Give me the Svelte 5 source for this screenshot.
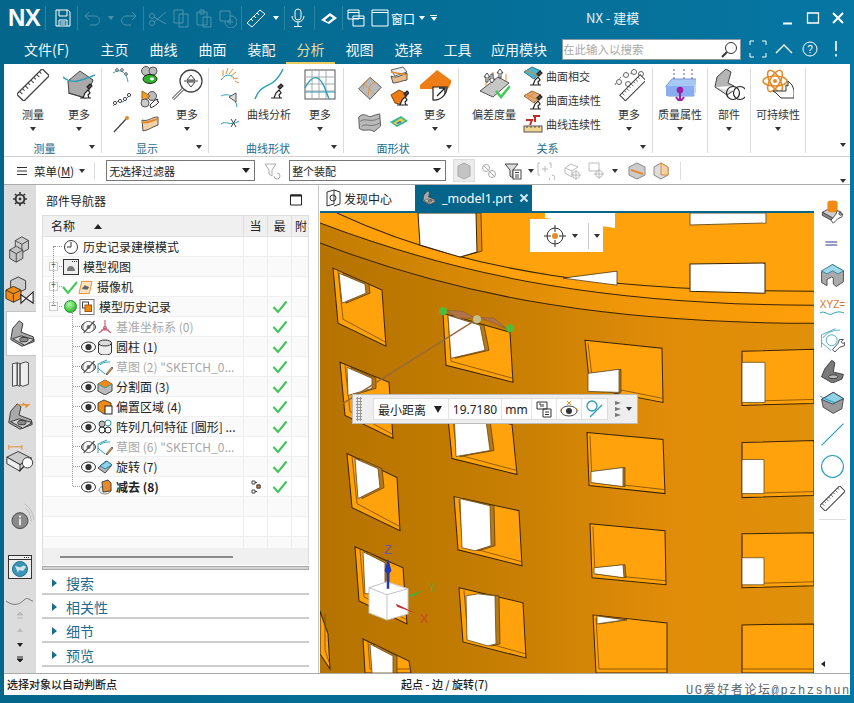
<script>
	const micro = (x, y) => `<g transform="translate(${x} ${y})" fill="#fff" stroke="#222" stroke-width="1.2"><path d="M-5 7h11M-2 7l2-5 3-3 2 3-2 2 1 3"/><path d="M2-4l3-3 2 2-3 3z" fill="#555"/></g>`;
	const ruler = `<g transform="rotate(-45 16 16)"><rect x="-2" y="11" width="36" height="10" fill="#fff" stroke="#444" stroke-width="1.3"/><path d="M2 11v4M6 11v3M10 11v4M14 11v3M18 11v4M22 11v3M26 11v4M30 11v3" stroke="#444"/></g>`;
	const part = `<path d="M4 22 6 10l7-8 4 3-2 9 13 5 1 5-13 5z" fill="#a9a9a9" stroke="#333"/><path d="M6 21l13 7 10-6-14-4z" fill="#d4d4d4" stroke="#333"/><ellipse cx="18" cy="22" rx="4.5" ry="2.4" fill="#8a8a8a" stroke="#333"/>`;
	const eye = (off) => `<ellipse cx="8" cy="8" rx="7" ry="5" fill="#fff" stroke="#333"/><circle cx="8" cy="8" r="3.1" fill="#333"/>` + (off ? `<circle cx="8" cy="8" r="5.6" fill="#fff" stroke="#777"/><circle cx="8" cy="8" r="2" fill="#777"/><path d="M3 14 14 2" stroke="#555" stroke-width="1.2"/>` : '');

	const icons = {
		measure: ruler,
		moreMeasure: `<path d="M5 12 17 2l13 9-7 18L6 24z" fill="#aaa" stroke="#444"/><path d="M5 24l17 5" stroke="#444"/><path d="M0 8c8 7 16 5 32-2" fill="none" stroke="#2a9db5" stroke-width="1.4"/>` + micro(22, 22),
		mag: `<circle cx="20" cy="12" r="11" fill="#fff" stroke="#444" stroke-width="1.3"/><path d="M13 12h14M20 6l-4 5h8zM20 18l-4-5h8z" fill="#fff" stroke="#444"/><path d="M12 20 2 30" stroke="#444" stroke-width="3"/><path d="M12 20 2 30" stroke="#fff" stroke-width="1.2"/>`,
		curveAna: `<path d="M2 30C8 12 20 22 30 0" fill="none" stroke="#2a9db5" stroke-width="1.4"/>` + micro(23, 22),
		graph: `<rect x="1" y="1" width="30" height="29" fill="#fff" stroke="#555"/><path d="M8 1v29M15 1v29M22 1v29M1 8h30M1 15h30M1 22h30" stroke="#aaa"/><path d="M1 19C10 2 17 8 22 22L25 30" fill="none" stroke="#2a9db5" stroke-width="1.4"/><path d="M1 23H31" stroke="#2a9db5"/>`,
		s_spikes: `<path d="M1 14C5 8 10 8 14 12" fill="none" stroke="#2a9db5"/><path d="M3 10 3 4M6 8l2-6M9 8l4-5M11 10l5-4M13 13l5-1M15 15l4 2" stroke="#e58a2c"/>`,
		s_dots: `<path d="M1 16 6 11l5 1 6-6" fill="none" stroke="#2a9db5"/><circle cx="3" cy="13" r="1.6" fill="#fff" stroke="#444"/><circle cx="8" cy="11" r="1.6" fill="#fff" stroke="#444"/><circle cx="13" cy="9" r="1.6" fill="#fff" stroke="#444"/><circle cx="17" cy="5" r="1.6" fill="#fff" stroke="#444"/>`,
		s_curvedots: `<path d="M1 7c6-4 13-3 15 9" fill="none" stroke="#2a9db5"/><circle cx="5" cy="4" r="1.3" fill="#fff" stroke="#555"/><circle cx="10" cy="4" r="1.3" fill="#fff" stroke="#555"/><circle cx="14" cy="8" r="1.3" fill="#fff" stroke="#555"/>`,
		s_pin: `<path d="M2 18 14 5" stroke="#444" stroke-width="1.3"/><circle cx="15" cy="4" r="2" fill="#e58a2c"/>`,
		s_green: `<circle cx="6" cy="5" r="4.5" fill="#bbb" stroke="#555"/><circle cx="13" cy="5" r="4" fill="#bbb" stroke="#555"/><ellipse cx="10" cy="13" rx="7" ry="4.5" fill="#2cb52c" stroke="#222"/><ellipse cx="12" cy="13" rx="2" ry="1.4" fill="#fff"/>`,
		s_wrench: `<circle cx="12" cy="6" r="4.5" fill="#bbb" stroke="#555"/><path d="M2 1l8 5-8 6z" fill="#f0a030" stroke="#a06010"/><circle cx="5" cy="13" r="4" fill="#ccc" stroke="#555"/><path d="M10 15l5-5 3-1-1 2 2 1-3 3-5 3z" fill="#fff" stroke="#333"/>`,
		s_band: `<path d="M2 6c6 2 9-3 16-3v8c-6 2-9 5-15 6z" fill="#f3d1a8" stroke="#555"/><path d="M2 8c6 2 9-2 16-3" fill="none" stroke="#e58a2c" stroke-width="2"/>`,
		s_approx: `<path d="M1 10c5-4 9 3 18-3" fill="none" stroke="#2a9db5"/><path d="M11 5l5 8M16 5l-5 8" stroke="#444"/>`,
		s_tri: `<path d="M1 6c7-3 14-1 16 11" fill="none" stroke="#2a9db5"/><path d="M9 7l7-4v9z" fill="#ddd" stroke="#555"/>`,
		f_net: `<path d="M2 17 16 3l14 12-14 15z" fill="#bbb" stroke="#444"/><path d="M8 17C8 8 14 4 16 4M14 25C14 12 20 8 24 10M8 10l14 14" fill="none" stroke="#e58a2c"/>`,
		f_wave: `<path d="M2 10c8-8 12 3 18-2l8-2 1 15-8 7c-6-5-12 1-18-4z" fill="#b9b9b9" stroke="#444"/><path d="M4 15c7-5 12 3 24-4M6 21c6-4 12 3 22-4" fill="none" stroke="#666"/>`,
		f_strip: `<path d="M2 4 14 1l4 5-12 4z" fill="#eee" stroke="#666"/><path d="M2 10c6 3 10-1 16-3v7c-6 1-10 3-14 3z" fill="#e8bc8a" stroke="#555"/><path d="M2 6l16 3" stroke="#e58a2c" stroke-width="1.5"/>`,
		f_orange: `<path d="M2 7 10 2l8 4-4 11-8-2z" fill="#ee7d16" stroke="#7a4410"/>` + micro(13, 10),
		f_rainbow: `<path d="M1 10 12 4l7 5-11 6z" fill="#34b59a"/><path d="M4 11l8-5 4 3-8 4z" fill="#e8d23a"/><path d="M7 11l4-2 2 1-4 2z" fill="#3a72d8"/>`,
		moreFace: `<path d="M1 16 18 1l15 11-4 8H1z" fill="#ee7d16"/><path d="M14 30v-12h14a13 13 0 0 1-14 13z" fill="#fff" stroke="#222" stroke-width="1.2"/><path d="M18 27l8-8M20 19h6v6" fill="none" stroke="#222" stroke-width="1.3"/>`,
		deviation: `<path d="M2 22 20 8l11 6-16 14z" fill="#c6c6c6" stroke="#555"/><path d="M8 17V6M15 11V3M22 10V1M28 12V5" stroke="#e58a2c"/><path d="M9 4l-3 4h2v5h2V8h2zM14 14l3-4h-2V5h-2v5h-2zM22 0l-3 4h2v5h2V4h2z" fill="#fff" stroke="#333" stroke-width=".9"/><path d="M18 22l5 6 9-11" fill="none" stroke="#3ecc55" stroke-width="2.6"/>`,
		r_inter: `<path d="M1 6 9 1l9 4-7 8z" fill="#4fb3cc" stroke="#2a7a90"/><path d="M2 4l14 6" stroke="#e58a2c"/>` + micro(12, 12),
		r_cont: `<path d="M1 6 9 1l9 4-7 8z" fill="#e0a878" stroke="#9a6a40"/><path d="M2 4l14 6M4 9l8-7" stroke="#e58a2c"/>` + micro(12, 12),
		r_curve: `<rect x="1" y="12" width="18" height="6" fill="#f2d690" stroke="#555"/><path d="M4 12v2M8 12v2M12 12v2M16 12v2" stroke="#555"/><path d="M3 6h6l-2 5M10 2h7M12 2v6" fill="none" stroke="#c42a2a" stroke-width="2"/>`,
		moreRel: `<path d="M2 16C6 6 18 1 30 6" fill="none" stroke="#666" stroke-dasharray="2 2"/><circle cx="6" cy="13" r="2.5" fill="#fff" stroke="#666"/><circle cx="13" cy="6" r="2.5" fill="#fff" stroke="#666"/><circle cx="21" cy="3" r="2.5" fill="#fff" stroke="#666"/><circle cx="28" cy="5" r="2.5" fill="#fff" stroke="#666"/><circle cx="15" cy="15" r="2.5" fill="#fff" stroke="#666"/><g transform="translate(7 6) scale(.8)">${ruler}</g>`,
		massProps: `<path d="M2 17 8 10h26l-4 8v9H4z" fill="#a8c8f4" stroke="#7a9ad0"/><path d="M2 17h28v10H2z" fill="#8aacf0"/><path d="M30 17l4-7v9l-4 8z" fill="#c0d8f4"/><path d="M10 0v10M20 0v10M28 0v10" stroke="#5a5ab0" stroke-dasharray="2 2"/><circle cx="16" cy="21" r="3.3" fill="#9c1fa8"/><path d="M16 24v8M12 28l4 5 4-5" fill="none" stroke="#9c1fa8" stroke-width="2"/>`,
		partRing: `<path d="M2 18 4 8l9-8 5 3-3 11 6 3" fill="#b5b5b5" stroke="#444"/><path d="M2 18l12 8 6-4" fill="#ddd" stroke="#444"/><circle cx="20" cy="24" r="6.5" fill="none" stroke="#222" stroke-width="1.2"/><circle cx="27" cy="24" r="6.5" fill="none" stroke="#222" stroke-width="1.2"/>`,
		sustain: `<g fill="none" stroke="#e58a2c" stroke-width="1.6"><ellipse cx="13" cy="12" rx="12" ry="5"/><ellipse cx="13" cy="12" rx="12" ry="5" transform="rotate(60 13 12)"/><ellipse cx="13" cy="12" rx="12" ry="5" transform="rotate(120 13 12)"/></g><circle cx="13" cy="12" r="2" fill="#e58a2c"/><path d="M11 22h13v-6l2 1v-5l4 4 2 5v8H19l-5-5z" fill="#fff" stroke="#333"/>`,
		gear: `<circle cx="8" cy="8" r="5" fill="none" stroke="#333" stroke-width="2.2"/><circle cx="8" cy="8" r="1.6" fill="#333"/><path d="M8 0v3M8 13v3M0 8h3M13 8h3M2.3 2.3l2 2M11.7 11.7l2 2M13.7 2.3l-2 2M4.3 11.7l-2 2" stroke="#333" stroke-width="1.8"/>`,
		cubes: `<path d="M18 3l7 4v9l-7 4-7-4V7z" fill="#ccc" stroke="#444"/><path d="M11 7l7 4 7-4M18 11v9" fill="none" stroke="#444"/><path d="M12 13l7 4v9l-7 4-7-4v-9z" fill="#c4c4c4" stroke="#444"/><path d="M5 17l7 4 7-4M12 21v9" fill="none" stroke="#444"/>`,
		cubesOrange: `<path d="M14 1l8 4v9l-8 4-8-4V5z" fill="#ccc" stroke="#333"/><path d="M9 11l8 4v9l-8 4-8-4v-9z" fill="#f08a12" stroke="#333"/><path d="M1 15l8 4 8-4M9 19v9" fill="none" stroke="#333"/><path d="M17 20l13 9V17L17 29z" fill="#fff" stroke="#222" stroke-width="1.2"/>`,
		part,
		books: `<path d="M8 4l5-1v24l-5 1zM13 3l3 1v24l-3-1zM16 4l6-2 3 1v23l-6 2-3-1z" fill="#eee" stroke="#444"/>`,
		partDim: part + `<path d="M14 3h12M19 1l4 4M26 2l-4 4" stroke="#e58a2c" stroke-width="1.3"/>`,
		partMag: `<path d="M2 14l12-6 14 7-12 7z" fill="#ccc" stroke="#333"/><path d="M2 14v7l14 8v-7zM16 22l12-7v4" fill="#eee" stroke="#333"/><path d="M4 3l14 0M4 1v5M18 1v5" stroke="#e58a2c"/><circle cx="24" cy="20" r="5.5" fill="#fff" stroke="#333"/><path d="M20 24l-5 5" stroke="#333" stroke-width="1.6"/>`,
		info: `<path d="M22 9a20 20 0 0 1 6 14M21 4a26 26 0 0 1 10 17" fill="none" stroke="#bbb"/><circle cx="16" cy="22" r="8.5" fill="#8a8a8a" stroke="#444"/><path d="M16 20v7" stroke="#fff" stroke-width="1.6"/><circle cx="16" cy="17.5" r="1.1" fill="#fff"/>`,
		browser: `<rect x=".5" y=".5" width="23" height="23" fill="#eee" stroke="#333"/><path d="M.5 4.500h23M16 2.500h1M18 2.500h1M20 2.500h1" stroke="#333"/><circle cx="12" cy="14" r="7.5" fill="#3a96b5" stroke="#28708c"/><path d="M7 11c3 0 4 2 6 1s3-2 5 0l-3 4-4-1-1 3zM12 8l4 1" fill="#d4e6ec"/>`,
		wave: `<path d="M0 4c8 6 14 3 18-1s6 1 9 1" fill="none" stroke="#777"/>`,
		r_gearBox: `<path d="M3 17l11-6 14 7-12 7z" fill="#ccc" stroke="#333"/><path d="M3 17v4l13 7v-4z" fill="#888" stroke="#333"/><ellipse cx="16" cy="5" rx="6.5" ry="3" fill="#f08a12"/><path d="M9.500 5v9a6.500 3 0 0 0 13 0V5z" fill="#f08a12"/><path d="M14 27l6-7 2-5 4 1-2 3 2 2 3-2-1 4-5 2-6 6z" fill="#fff" stroke="#222"/>`,
		r_eq: `<path d="M7 14h15M7 18h15" stroke="#2a3a90" stroke-width="1.4"/>`,
		r_cube: `<path d="M16 2 30 10v14l-9 6-4-3v-8l-2-1-6 3v8l-7-4V11z" fill="#aaa" stroke="#333"/><path d="M2 10l14-8 14 8-7 4-7-4-7 4z" fill="#9ed8ea" stroke="#2a7a90"/>`,
		r_sketch: `<path d="M2 26V10L20 2" fill="none" stroke="#2a9db5"/><path d="M2 20 14 30M4 14C10 4 22 4 26 4" fill="none" stroke="#2a9db5"/><circle cx="15" cy="17" r="7" fill="none" stroke="#2a9db5"/><path d="M16 29l7-8 2-5 5 0-3 3 2 2 3-1-1 4-6 2-6 6z" fill="#fff" stroke="#222"/>`,
		r_part: `<path d="M2 24 6 14l9-11 4 3-2 12 13 3-2 6-12 5z" fill="#7a7a7a" stroke="#222"/><ellipse cx="17" cy="24" rx="6" ry="2.5" fill="#bbb" stroke="#222"/>`,
		r_blade: `<path d="M2 12 17 3l13 8-2 13-11 6L4 22z" fill="#9a9a9a" stroke="#333"/><path d="M2 12l15-9 13 8-14 7z" fill="#8ed2ea" stroke="#333"/><path d="M7 12l12 4M0 8l20 9" stroke="#2a9db5"/>`,
		r_line: `<path d="M2 30 30 2" stroke="#1f9cc0" stroke-width="1.4" fill="none"/>`,
		r_circle: `<circle cx="16" cy="16" r="14" fill="none" stroke="#1f9cc0" stroke-width="1.4"/>`
	};

	const menuItems = ['主页', '曲线', '曲面', '装配', '分析', '视图', '选择', '工具', '应用模块'];

	const tree = [
		{ pad: 19, kind: 'clock', text: '历史记录建模模式' },
		{ pad: 19, kind: 'views', toggle: '+', text: '模型视图' },
		{ pad: 19, kind: 'camera', toggle: '+', text: '摄像机' },
		{ pad: 21, kind: 'history', toggle: '−', text: '模型历史记录', ok: true },
		{ pad: 37, off: true, type: 'datum', text: '基准坐标系 (0)', gray: true, ok: true },
		{ pad: 37, type: 'cyl', text: '圆柱 (1)', ok: true },
		{ pad: 37, off: true, type: 'sketch', text: '草图 (2) "SKETCH_0...', gray: true, ok: true },
		{ pad: 37, type: 'split', text: '分割面 (3)', ok: true },
		{ pad: 37, type: 'offset', text: '偏置区域 (4)', ok: true },
		{ pad: 37, type: 'pattern', text: '阵列几何特征 [圆形] ...', ok: true },
		{ pad: 37, off: true, type: 'sketch', text: '草图 (6) "SKETCH_0...', gray: true, ok: true },
		{ pad: 37, type: 'revolve', text: '旋转 (7)', ok: true },
		{ pad: 37, type: 'subtract', text: '减去 (8)', bold: true, ok: true, dep: true },
		{}, {}, {}
	];

	const typeIcons = {
		datum: `<path d="M8 1v8M8 9 2 14M8 9l6 5M4 11h8" fill="none" stroke="#d0607a" stroke-width="1.2"/><circle cx="8" cy="9" r="1.6" fill="none" stroke="#d0607a"/>`,
		cyl: `<path d="M1.500 4v9c0 4 13 4 13 0V4" fill="#eee" stroke="#333"/><ellipse cx="8" cy="4" rx="6.5" ry="3" fill="#ddd" stroke="#333"/>`,
		sketch: `<path d="M1 14V5l9-4M1 9l7 6M3 6c3-3 7-3 10-3" fill="none" stroke="#2a9db5"/><path d="M9 15l6-7 1 1-6 7z" fill="#f0b030" stroke="#333" stroke-width=".7"/>`,
		split: `<path d="M8 1 15 5v7l-7 4-7-4V5z" fill="#bbb" stroke="#444"/><path d="M1 5l7-4 7 4-7 4z" fill="#f08a12"/><path d="M1 5l7 4 7-4" fill="none" stroke="#2a9db5"/>`,
		offset: `<path d="M7 1 14 4v7l-7 4-6-4V4z" fill="#f08a12" stroke="#444"/><rect x="8" y="7" width="7" height="8" fill="#fff" stroke="#222"/>`,
		pattern: `<circle cx="5" cy="5" r="3" fill="#bbb" stroke="#444"/><circle cx="11" cy="4" r="3" fill="#fff" stroke="#2a9db5"/><circle cx="5" cy="11" r="3" fill="#fff" stroke="#222"/><circle cx="11" cy="11" r="3" fill="#fff" stroke="#222"/>`,
		revolve: `<path d="M1 9l8-7 6 4-7 8z" fill="#bbb" stroke="#444"/><path d="M3 7l7-5 5 4-7 4z" fill="#8ed2ea" stroke="#2a7a90"/>`,
		subtract: `<ellipse cx="8" cy="11" rx="6" ry="4" fill="#eee" stroke="#888"/><path d="M5 3l6-2 3 3v8l-8 1z" fill="#e58a2c" stroke="#444"/>`
	};

	// outer quad (TL TR BR BL) and the bit of sky seen through it
	const win = (o, w) => {
		const p = o.split(' ').map((s) => s.split(',').map(Number));
		const x = p[0][0];
		const inset = x < 500 ? 5 : x < 700 ? 3 : 0;
		const post = x < 500 ? 4 : x < 700 ? 2 : 0;
		const [tl, , br, bl] = p;
		const ledge = `M${tl[0] + inset} ${tl[1] + 3}L${bl[0] + inset} ${bl[1] - 4}L${br[0]} ${br[1] - 4}`;
		return { o, w, ledge, post };
	};
	const windows = [
		win('333,268 382,290 386,346 338,323', '339,273 365,284 366,293 342,303'),
		win('443,313 510,332 513,382 446,365', '448,315 480,325 485,350 451,358'),
		win('340,362 389,382 393,438 345,415', '347,367 372,378 372,388 348,395'),
		win('347,453 397,477 400,530 352,507', '355,458 378,468 380,487 358,498'),
		win('355,546 403,567 407,623 359,600', '363,551 385,562 385,592 365,593'),
		win('363,638 409,660 411,672 365,672', '370,643 393,655 393,672 372,672'),
		win('447,408 512,424 517,474 452,458', '454,411 486,420 490,450 456,456'),
		win('454,496 519,510 522,565 458,549', '460,498 490,505 491,545 475,550 462,547'),
		win('459,587 523,602 526,657 463,641', '466,595 478,593 495,595 496,643 488,645 467,639'),
		win('585,340 662,348 663,402 590,388', '588,373 619,369 619,392 588,391'),
		win('587,432 663,439 665,493 589,485', '591,471 623,467 623,486 591,482'),
		win('590,523 665,530 666,584 592,577', '594,567 623,564 624,577 594,573'),
		win('593,614 667,622 667,672 596,672', '597,615 625,619 597,623'),
		win('742,351 814,349 814,403 742,405', '742,362 765,362 765,402 742,402'),
		win('742,442 814,440 814,495 742,497', '742,459 764,459 764,493 742,493'),
		win('742,533 814,532 814,585 742,587', '742,557 764,557 764,584 742,584'),
		win('742,624 814,623 814,672 742,672', ''),
		win('320,610 328,633 330,668 320,653', '')
	];

	const leftIcons = ['cubes', 'cubesOrange', 'part', 'books', 'partDim', 'partMag'];
	const rightIcons = ['r_gearBox', 'r_eq', 'r_cube', 'xyz', 'r_sketch', 'r_part', 'r_blade', 'r_line', 'r_circle', 'measure'];
</script>

{#snippet ic(name, size = 32)}
	<svg class="ic" width={size} height={size} viewBox="0 0 32 32">{@html icons[name]}</svg>
{/snippet}

{#snippet small(name)}
	<svg class="ic" width="20" height="20" viewBox="0 0 20 20">{@html icons[name]}</svg>
{/snippet}

{#snippet caret()}
	<span class="caret"></span>
{/snippet}

{#snippet tool(name, label, more = true)}
	<div class="tool">
		{@render ic(name)}
		<span class="tool-label">{label}</span>
		{#if more}{@render caret()}{/if}
	</div>
{/snippet}

<div class="window">
	<header class="titlebar">
		<span class="logo">NX</span>
		<i class="sep"></i>
		<svg class="qa m7" width="20" height="20" viewBox="0 0 20 20" fill="none" stroke="#fff"><path d="M3 2h12l2 2v14H3z" /><path d="M6 2v6h8V2M6 18v-6h8v6M7.500 14h5M7.500 16h5" /></svg>
		<i class="sep"></i>
		<div class="dim m4">
			<svg width="20" height="20" viewBox="0 0 20 20" fill="none" stroke="#fff"><path d="M4 8h9a4 4 0 0 1 0 9H8M7 4 3 8l4 4" /></svg>
			<span class="caret light m6"></span>
			<svg class="m5" width="20" height="20" viewBox="0 0 20 20" fill="none" stroke="#fff"><path d="M16 8H7a4 4 0 0 0 0 9h5M13 4l4 4-4 4" /></svg>
		</div>
		<i class="sep"></i>
		<div class="dim m4 spaced">
			<svg width="20" height="20" viewBox="0 0 20 20" fill="none" stroke="#fff"><circle cx="4" cy="15" r="2.500" /><circle cx="4" cy="8" r="2.500" /><path d="M6 14 18 4M6 9l12 7" /></svg>
			<svg width="20" height="20" viewBox="0 0 20 20" fill="none" stroke="#fff"><path d="M3 2h9v13H3zM8 6h9v13H8z" /></svg>
			<svg width="20" height="20" viewBox="0 0 20 20" fill="none" stroke="#fff"><path d="M3 4h10v13H3zM6 2h4v4H6zM9 9h8v10H9z" /></svg>
			<svg width="20" height="20" viewBox="0 0 20 20" fill="none" stroke="#fff"><path d="M3 3h10v10H3zM13 8a6 6 0 1 1-5 5M13 11v6M10 14h6" /></svg>
		</div>
		<i class="sep"></i>
		<svg class="qa m4" width="20" height="20" viewBox="0 0 20 20" fill="none" stroke="#fff"><path d="M1 15 14 2l5 4L6 19zM5 11l2 2M8 8l2 2M11 5l2 2" /></svg>
		<span class="caret light m7"></span>
		<i class="sep m5"></i>
		<svg class="qa m4" width="18" height="20" viewBox="0 0 18 20" fill="none" stroke="#fff"><rect x="6" y="1" width="6" height="11" rx="3" /><path d="M3 8a6 6 0 0 0 12 0M9 14v4M5 18.500h8" /></svg>
		<i class="sep m7"></i>
		<svg class="qa m5" width="18" height="14" viewBox="0 0 18 14"><path d="M1 9l9-7 7 5-8 6z" fill="#fff" /><path d="M5 9l5-4 3 2-5 4z" fill="#056a8f" /></svg>
		<i class="sep"></i>
		<svg class="qa m4" width="18" height="18" viewBox="0 0 18 18" fill="none" stroke="#fff"><path d="M1 1h11v9H1zM1 3.500h11M6 7h11v10H6zM6 9.500h11" /></svg>
		<svg class="qa m6" width="18" height="18" viewBox="0 0 18 18" fill="none" stroke="#fff"><path d="M1 1h16v16H1zM1 3.500h16" /></svg>
		<span class="win-label m2">窗口</span>
		<span class="caret light m4"></span>
		<span class="customize m5">
			<i></i>
			<span class="caret light"></span>
		</span>
		<span class="app-title">NX - 建模</span>
		<div class="win-btns">
			<svg width="16" height="16" viewBox="0 0 16 16"><path d="M3 13.500h9" stroke="#fff" stroke-width="2" /></svg>
			<svg width="16" height="16" viewBox="0 0 16 16" fill="none"><path d="M2.500 3h11v10h-11z" stroke="#fff" stroke-width="1.300" /></svg>
			<svg width="16" height="16" viewBox="0 0 16 16"><path d="M3 3l10 10M13 3 3 13" stroke="#fff" stroke-width="2" /></svg>
		</div>
	</header>

	<nav class="menubar">
		<span class="file">文件(F)</span>
		<div class="tabs">
			{#each menuItems as m}
				<span class="tab" class:active={m === '分析'} class:wide={m === '应用模块'}>{m}</span>
			{/each}
		</div>
		<div class="search">
			<span>在此输入以搜索</span>
			<svg width="18" height="18" viewBox="0 0 18 18" fill="none" stroke="#333"><circle cx="11" cy="7" r="5.500" fill="#fff" /><path d="M7 11l-5 5" stroke-width="2" /></svg>
		</div>
		<div class="menu-right">
			<svg width="18" height="18" viewBox="0 0 18 18" fill="none" stroke="#fff"><path d="M1 5V1h4M13 1h4v4M1 13v4h4M13 17h4v-4" /></svg>
			<svg width="18" height="18" viewBox="0 0 18 18" fill="none" stroke="#fff" stroke-width="1.300"><path d="M1 13 9 5l8 8" /></svg>
			<svg width="18" height="18" viewBox="0 0 18 18" fill="none" stroke="#fff"><circle cx="9" cy="9" r="7" /><text x="9" y="12.500" font-size="10" text-anchor="middle" fill="#fff" stroke="none" font-family="Liberation Sans">?</text></svg>
			<svg width="18" height="18" viewBox="0 0 18 18"><path d="M9 1v10M9 14v2.500" stroke="#fff" stroke-width="1.600" /></svg>
		</div>
	</nav>

	<section class="ribbon">
		<div class="group g1">
			<div class="tools">
				{@render tool('measure', '测量')}
				{@render tool('moreMeasure', '更多')}
			</div>
			<div class="gtitle"><span>测量</span>{@render caret()}</div>
		</div>
		<div class="group g2">
			<div class="tools">
				<div class="smalls">
					{#each ['s_curvedots', 's_green', 's_dots', 's_wrench', 's_pin', 's_band'] as n}{@render small(n)}{/each}
				</div>
				{@render tool('mag', '更多')}
			</div>
			<div class="gtitle"><span>显示</span>{@render caret()}</div>
		</div>
		<div class="group g3">
			<div class="tools">
				<div class="smalls one">
					{#each ['s_spikes', 's_tri', 's_approx'] as n}{@render small(n)}{/each}
				</div>
				<div class="tool w50">{@render ic('curveAna')}<span class="tool-label">曲线分析</span></div>
				{@render tool('graph', '更多')}
			</div>
			<div class="gtitle"><span>曲线形状</span>{@render caret()}</div>
		</div>
		<div class="group g4">
			<div class="tools">
				<div class="face-grid">
					{@render ic('f_net', 26)}
					{@render small('f_strip')}
					{@render small('f_orange')}
					{@render ic('f_wave', 26)}
					{@render small('f_rainbow')}
				</div>
				{@render tool('moreFace', '更多')}
			</div>
			<div class="gtitle"><span>面形状</span>{@render caret()}</div>
		</div>
		<div class="group g5">
			<div class="tools">
				<div class="tool w56">{@render ic('deviation')}<span class="tool-label">偏差度量</span></div>
				<div class="rel-list">
					<div class="rel">{@render small('r_inter')}<span>曲面相交</span></div>
					<div class="rel">{@render small('r_cont')}<span>曲面连续性</span></div>
					<div class="rel">{@render small('r_curve')}<span>曲线连续性</span></div>
				</div>
				{@render tool('moreRel', '更多')}
			</div>
			<div class="gtitle"><span>关系</span>{@render caret()}</div>
		</div>
		<div class="group g6"><div class="tools">{@render tool('massProps', '质量属性')}</div></div>
		<div class="group g7"><div class="tools">{@render tool('partRing', '部件')}</div></div>
		<div class="group g8"><div class="tools">{@render tool('sustain', '可持续性')}</div></div>
		<div class="ribbon-end">{@render caret()}</div>
	</section>

	<section class="selbar">
		<svg width="12" height="12" viewBox="0 0 12 12"><path d="M1 2.500h10M1 6h10M1 9.500h10" stroke="#333" /></svg>
		<span class="menu-btn">菜单(<u>M</u>)</span>
		{@render caret()}
		<i class="vsep"></i>
		<div class="combo c1"><span>无选择过滤器</span><b class="combo-arrow"></b></div>
		<svg class="funnel" width="18" height="18" viewBox="0 0 18 18" fill="none" stroke="#aaa"><path d="M2 2h11L9 8v6L6 12V8z" /><path d="M11 14a3 3 0 1 0 3-3" /></svg>
		<div class="combo c2"><span>整个装配</span><b class="combo-arrow"></b></div>
		<div class="sel-tools">
			<span class="pressed"><svg width="16" height="18" viewBox="0 0 16 18"><path d="M8 1 14 4v10l-6 3-6-3V4z" fill="#c4c4c4" stroke="#aaa" /></svg></span>
			<svg width="18" height="18" viewBox="0 0 18 18" fill="none" stroke="#aaa"><circle cx="6" cy="6" r="3.500" /><circle cx="12" cy="12" r="3.500" /><path d="M3 3l12 12" /></svg>
			<svg width="18" height="18" viewBox="0 0 18 18" fill="none" stroke="#444"><path d="M1 2h13L9 8v8L6 14V8z" fill="#ddd" /><rect x="9" y="8" width="8" height="9" fill="#fff" /><path d="M11 10.500h4M11 13h4M11 15h4" /></svg>
			{@render caret()}
			<svg class="t4" width="18" height="18" viewBox="0 0 18 18" fill="none" stroke="#bbb"><path d="M3 1H1v12h2M12 1h2v5M5 7h6M8 4v6" /><path d="M12 16a3 3 0 1 0 3-3" /></svg>
			<svg class="t6" width="18" height="18" viewBox="0 0 18 18" fill="none" stroke="#bbb"><path d="M1 6l6-4 7 3-6 4zM1 6v5l7 4V9" /><circle cx="12" cy="13" r="3.500" /><path d="M12 8v10M7 13h10" /></svg>
			<svg width="18" height="18" viewBox="0 0 18 18" fill="none" stroke="#bbb"><path d="M1 1h10v8H1z" /><circle cx="11" cy="12" r="3.500" /><path d="M11 7v10M6 12h10" /></svg>
			{@render caret()}
			<svg class="t5" width="18" height="18" viewBox="0 0 18 18"><path d="M9 1l8 4v8l-8 4-8-4V5z" fill="#ccc" stroke="#888" /><path d="M3 8l12 4" stroke="#e58a2c" stroke-width="2" /></svg>
			<svg width="18" height="18" viewBox="0 0 18 18" fill="none"><path d="M9 1l7 4v8l-7 4-7-4V5z" fill="#ddd" stroke="#888" /><path d="M9 1l7 4v8H9z" fill="#f3d1a8" stroke="#e58a2c" /></svg>
			<i class="vsep last"></i>
		</div>
		<div class="sel-end">{@render caret()}</div>
	</section>

	<main class="body">
		<aside class="leftbar">
			<div class="lb-gear">
				<svg width="14" height="14" viewBox="0 0 16 16">{@html icons.gear}</svg>
			</div>
			{#each leftIcons as name}
				<div class="lb-item" class:selected={name === 'part'}>{@render ic(name, 30)}</div>
			{/each}
			<div class="lb-info">{@render ic('info', 30)}</div>
			<svg class="lb-browser" width="24" height="24" viewBox="0 0 24 24">{@html icons.browser}</svg>
			<svg class="lb-wave" width="28" height="8" viewBox="0 0 28 8">{@html icons.wave}</svg>
			<div class="lb-arrows">
				<svg width="10" height="8" viewBox="0 0 10 8"><path d="M2 4l3-3 3 3zM2 7h6" fill="#bbb" stroke="#bbb" /></svg>
				<svg width="10" height="8" viewBox="0 0 10 8"><path d="M2 6l3-4 3 4z" fill="#bbb" /></svg>
				<svg width="10" height="8" viewBox="0 0 10 8"><path d="M2 2l3 4 3-4z" fill="#222" /></svg>
				<svg width="10" height="8" viewBox="0 0 10 8"><path d="M2 3l3 3 3-3zM2 1h6" fill="#222" stroke="#222" /></svg>
			</div>
		</aside>

		<section class="navigator">
			<div class="nav-head">
				<span>部件导航器</span>
				<svg width="14" height="14" viewBox="0 0 14 14" fill="none" stroke="#222"><path d="M1.500 2h11v10h-11z" /><path d="M1.500 2.500h11" stroke-width="2" /></svg>
			</div>
			<div class="tree">
				<div class="thead">
					<div class="th name"><span>名称</span><b class="up"></b></div>
					<div class="th">当</div>
					<div class="th">最</div>
					<div class="th clip">附</div>
				</div>
				<div class="rows">
					{#each tree as r, idx}
						<div class="row" class:alt={idx % 2 === 1}>
							<div class="cell name" style:padding-left={(r.pad ?? 0) + 'px'}>
								{#if r.text}
									<i class="hdots" class:deep={r.type}></i>
								{/if}
								{#if r.toggle}<span class="toggle">{r.toggle}</span>{/if}
								{#if r.kind === 'clock'}
									<svg class="k" width="18" height="18" viewBox="0 0 18 18" fill="none" stroke="#333"><circle cx="9" cy="9" r="6.500" fill="#fff" /><path d="M9 4v5H5" /></svg>
								{:else if r.kind === 'views'}
									<svg class="k" width="18" height="18" viewBox="0 0 18 18"><rect x="1.500" y="1.500" width="15" height="15" fill="#eee" stroke="#333" /><path d="M5 13c0-4 2-5 4-5s4 2 4 5z" fill="#777" /><path d="M10 3.500h5" stroke="#333" stroke-dasharray="1 1" /></svg>
								{:else if r.kind === 'camera'}
									<svg class="k" width="16" height="16" viewBox="0 0 16 16"><path d="M1 8l5 6 9-11" fill="none" stroke="#3ecc55" stroke-width="2" /></svg>
									<svg class="k cam" width="15" height="16" viewBox="0 0 16 16"><path d="M4 2h11l-3 13H1z" fill="#fbe3c3" stroke="#e58a2c" /><path d="M4 10l3-4 5 2-2 3z" fill="#666" /></svg>
								{:else if r.kind === 'history'}
									<span class="ball"></span>
									<svg class="k" width="16" height="18" viewBox="0 0 16 18"><rect x="1" y="1.500" width="14" height="15" fill="#fff" stroke="#777" /><rect x="3.500" y="4" width="6" height="6" fill="#fff" stroke="#444" /><rect x="6" y="7" width="6.500" height="6.500" fill="#f08a12" stroke="#a05a10" /></svg>
								{/if}
								{#if r.type}
									<svg class="eye" width="17" height="16" viewBox="0 0 16 16">{@html eye(r.off)}</svg>
									<svg class="tp" width="16" height="16" viewBox="0 0 16 16">{@html typeIcons[r.type]}</svg>
								{/if}
								{#if r.text}
									<span class="txt" class:gray={r.gray} class:bold={r.bold} class:gap={r.kind === 'camera' || r.kind === 'history'}>{r.text}</span>
								{/if}
							</div>
							<div class="cell">
								{#if r.dep}
									<svg width="10" height="14" viewBox="0 0 10 14" fill="none" stroke="#444"><path d="M1 1h3v3H1zM6 5h3v3H6zM1 10h3v3H1zM4 2.500h2M4 11.500h2" /><rect x="6" y="5" width="3" height="3" fill="#e58a2c" /></svg>
								{/if}
							</div>
							<div class="cell">
								{#if r.ok}
									<svg width="16" height="14" viewBox="0 0 16 14"><path d="M1.500 7 6 12 14.500 1.500" fill="none" stroke="#3ec45a" stroke-width="2" /></svg>
								{/if}
							</div>
							<div class="cell last"></div>
						</div>
					{/each}
					<i class="dotline"></i>
					<i class="dotline inner"></i>
				</div>
				<div class="hscroll"><i></i></div>
			</div>
			<div class="sash"></div>
			<div class="panels">
				{#each ['搜索', '相关性', '细节', '预览'] as p}
					<div class="panel"><b></b><span>{p}</span></div>
				{/each}
			</div>
		</section>

		<section class="graphics">
			<div class="gtabs">
				<div class="gtab">
					<svg width="17" height="18" viewBox="0 0 17 18" fill="none" stroke="#333"><path d="M2 3l7-2v14l-7 2zM9 1l6 2v12l-6 2" /><circle cx="8" cy="9" r="3" /></svg>
					<span>发现中心</span>
				</div>
				<div class="gtab current">
					<svg width="18" height="16" viewBox="0 0 32 32">{@html part}</svg>
					<span>_model1.prt</span>
					<svg class="x" width="10" height="10" viewBox="0 0 10 10"><path d="M1.500 1.500l7 7M8.500 1.500l-7 7" stroke="#d8e6ee" stroke-width="2" /></svg>
				</div>
			</div>
			<div class="canvas">
				<svg class="scene" viewBox="320 213 494 459" preserveAspectRatio="none">
					<defs>
						<linearGradient id="wall" x1="0" x2="1" y1="0" y2="0">
							<stop offset="0" stop-color="#b57300" />
							<stop offset=".35" stop-color="#c57d02" />
							<stop offset=".7" stop-color="#e08c08" />
							<stop offset="1" stop-color="#e0900a" />
						</linearGradient>
						<linearGradient id="band" x1="0" x2="1" y1="0" y2="0">
							<stop offset="0" stop-color="#c27c02" />
							<stop offset=".6" stop-color="#ee9608" />
							<stop offset="1" stop-color="#ff9f0a" />
						</linearGradient>
					</defs>
					<rect x="320" y="213" width="494" height="459" fill="#ffa20c" />
					<path d="M320 213H337C470 275 620 291 814 291V305C620 305 470 280 320 223Z" fill="#fda00a" />
					<path d="M320 223C470 280 620 305 814 305V325H320Z" fill="url(#band)" />
					<path d="M320 243C470 300 620 323 814 323V672H320Z" fill="url(#wall)" />
					<g fill="none" stroke="#3a2405" stroke-width="1">
						<path d="M337 213C470 275 620 291 814 291" />
						<path d="M320 223C470 280 620 305 814 305" />
						<path d="M320 243C470 300 620 323 814 323" />
					</g>
					<polygon points="476,213 481,213 482,251 460,257" fill="#e08c08" stroke="#3a2405" stroke-width=".7" />
					<polygon points="418,213 476,213 477,252 460,257 420,245" fill="#fff" stroke="#3a2405" />
					<polygon points="545,213 615,213 615,228 545,218" fill="#fff" />
					<polygon points="563,278 617,271 617,285" fill="#fff" stroke="#3a2405" stroke-width=".7" />
					<polygon points="690,213 766,213 766,223 690,225" fill="#fff" stroke="#7a5a25" />
					<polygon points="690,264 765,263 765,293 690,291" fill="#fff" stroke="#3a2405" />
					{#each windows as w}
						<polygon points={w.o} fill="#ffa20c" stroke="#3a2405" />
						<path d={w.ledge} fill="none" stroke="#7a4a08" stroke-width=".8" />
						{#if w.w}
							{#if w.post}<polygon points={w.w} fill="#b87a10" stroke="#3a2405" stroke-width=".6" transform="translate({w.post} 0)" />{/if}
							<polygon points={w.w} fill="#fff" stroke="#6a4a15" stroke-width=".8" />
						{/if}
					{/each}
					<!-- measure leader -->
					<path d="M343 403 477 319" stroke="#9a6a3a" stroke-width="1.500" fill="none" />
					<path d="M446 310l17 1 12 7-17 0zM507 329l-15-7-14-5 16 1z" fill="#b0744a" stroke="#8a5a2f" stroke-width=".6" />
					<circle cx="477" cy="319" r="4" fill="#c7bf90" />
					<circle cx="443" cy="311" r="4" fill="#4fbb3c" />
					<circle cx="510" cy="328" r="4" fill="#4fbb3c" />
					<!-- triad -->
					<path d="M369 587l18-6 21 7v25l-21 6-18-7z" fill="#fff" stroke="#c5c5c5" />
					<path d="M369 587l18 7 21-6M387 594v25" fill="none" stroke="#c5c5c5" />
					<path d="M388 588v-18" stroke="#2038b8" stroke-width="2.500" />
					<path d="M388 558l-3.500 12 3.500 4 3.500-4z" fill="#2038b8" />
					<path d="M408 595l16-6-11 7z" fill="#4caa3c" />
					<path d="M396 603l21 10-20-7z" fill="#c23030" />
					<g font-family="Liberation Sans, sans-serif" font-size="13">
						<text x="388" y="553" text-anchor="middle" fill="#6a56a8">Z</text>
						<text x="432" y="591" text-anchor="middle" fill="#7f9a28">Y</text>
						<text x="424" y="622" text-anchor="middle" fill="#c8452a">X</text>
					</g>
				</svg>

				<div class="view-tool">
					<svg width="24" height="24" viewBox="0 0 24 24" fill="none" stroke="#333"><circle cx="12" cy="12" r="8" /><path d="M12 1v7M12 16v7M1 12h7M16 12h7" /><circle cx="12" cy="12" r="3" fill="#e58a2c" stroke="none" /></svg>
					{@render caret()}
					<i></i>
					{@render caret()}
				</div>

				<div class="measure-bar">
					<span class="grip"></span>
					<div class="fields">
						<div class="field dist"><span>最小距离</span><b></b></div>
						<div class="field val">19.7180</div>
						<div class="field unit">mm</div>
						<div class="field icn"><svg width="18" height="18" viewBox="0 0 18 18" fill="none" stroke="#333"><path d="M2 2h10v7H2z" /><path d="M8 9h8v8H8zM10 12h4M10 14.500h4" /><path d="M4 4h2v3M8 4v3" /></svg></div>
						<div class="field icn"><svg width="20" height="18" viewBox="0 0 20 18" fill="none"><ellipse cx="10" cy="11" rx="8" ry="5" stroke="#444" /><circle cx="10" cy="11" r="3" fill="#333" /><path d="M1 11l2-3M19 11l-2-3M8 1l4 4M12 1 8 5" stroke="#e58a2c" /></svg></div>
						<div class="field icn"><svg width="18" height="18" viewBox="0 0 18 18" fill="none" stroke="#2a9db5" stroke-width="1.300"><circle cx="6" cy="6" r="5" /><path d="M4 17 16 5" /></svg></div>
					</div>
					<div class="bar-more">
						<svg width="8" height="18" viewBox="0 0 8 18" fill="#777"><path d="M1 1l6 2-6 2zM1 7l6 2-6 2zM1 13l6 2-6 2z" /></svg>
						{@render caret()}
					</div>
				</div>
			</div>
		</section>

		<aside class="rightbar">
			{#each rightIcons as n}
				<div class="rb-item">
					{#if n === 'xyz'}
						<div class="xyz"><span>XYZ=</span><svg width="24" height="5" viewBox="0 0 24 5"><path d="M0 3c5-3 8 3 12 1s7-3 12-1" fill="none" stroke="#2a9db5" /></svg></div>
					{:else}
						{@render ic(n, 25)}
					{/if}
				</div>
			{/each}
			<i class="rb-line"></i>
			<span class="rb-arrow"></span>
		</aside>
	</main>

	<footer class="status">
		<span class="st-left">选择对象以自动判断点</span>
		<span class="st-mid">起点 - 边 / 旋转(7)</span>
	</footer>
	<span class="watermark">UG爱好者论坛@pzhzshun</span>
</div>

<style>
	:global(body) {
		margin: 0;
	}

	.window {
		position: relative;
		width: 854px;
		height: 703px;
		overflow: hidden;
		display: flex;
		flex-direction: column;
		background: linear-gradient(90deg, #04668b, #0676a2);
		font-family: "Noto Sans CJK SC", "Noto Sans", sans-serif;
		font-size: 12px;
		color: #222;
	}

	.ic {
		display: block;
		flex: none;
	}

	.caret {
		display: inline-block;
		flex: none;
		width: 0;
		height: 0;
		border: 3.5px solid transparent;
		border-top: 4px solid #333;
		border-bottom: 0;
	}

	.caret.light {
		border-top-color: #fff;
	}

	/* title */
	.titlebar {
		position: relative;
		height: 36px;
		flex: none;
		display: flex;
		align-items: center;
		padding-left: 8px;
		box-sizing: border-box;
	}

	.m2 { margin-left: 2px; }
	.m4 { margin-left: 4px; }
	.m5 { margin-left: 5px; }
	.m6 { margin-left: 6px; }
	.m7 { margin-left: 7px; }

	.logo {
		font-family: "Liberation Sans", sans-serif;
		font-weight: 700;
		font-size: 24px;
		letter-spacing: -0.5px;
		color: #fff;
		width: 33px;
		flex: none;
	}

	.sep {
		width: 1px;
		height: 24px;
		background: #2a84a6;
		margin-left: 4px;
		flex: none;
	}

	.sep.m5 { margin-left: 5px; }
	.sep.m7 { margin-left: 7px; }

	.qa {
		flex: none;
	}

	.dim {
		display: flex;
		align-items: center;
		opacity: 0.28;
		flex: none;
	}

	.dim.spaced {
		gap: 3px;
	}

	.win-label {
		color: #fff;
		font-size: 12px;
		flex: none;
	}

	.customize {
		display: flex;
		flex-direction: column;
		align-items: center;
		gap: 1px;
	}

	.customize i {
		width: 7px;
		height: 1px;
		background: #fff;
	}

	.app-title {
		position: absolute;
		left: 586px;
		top: 8px;
		color: #e6f1f5;
		font-size: 13px;
	}

	.win-btns {
		position: absolute;
		right: 8px;
		top: 10px;
		display: flex;
		gap: 9px;
	}

	/* menu */
	.menubar {
		position: relative;
		height: 28px;
		flex: none;
		display: flex;
		align-items: flex-start;
		color: #f2f7f9;
		font-size: 14px;
		line-height: 26px;
	}

	.file {
		margin-left: 24px;
		width: 66px;
		flex: none;
	}

	.tabs {
		display: flex;
		width: 470px;
		flex: none;
	}

	.tab {
		width: 49px;
		height: 26px;
		flex: none;
		text-align: center;
	}

	.tab.wide {
		width: 74px;
	}

	.tab.active {
		color: #e9dc9a;
		border-bottom: 2px solid #eacb5e;
	}

	.search {
		position: absolute;
		left: 562px;
		top: 3px;
		width: 179px;
		height: 21px;
		box-sizing: border-box;
		background: #fff;
		border: 1px solid #8a9aa2;
		display: flex;
		align-items: center;
		justify-content: space-between;
		padding-right: 2px;
		color: #aaa;
		font-size: 11.5px;
		line-height: 19px;
	}

	.menu-right {
		position: absolute;
		left: 749px;
		top: 4px;
		display: flex;
		gap: 8px;
	}

	/* ribbon */
	.ribbon {
		margin: 0 4px;
		height: 93px;
		flex: none;
		background: #fff;
		display: flex;
		border-bottom: 1px solid #d0d0d0;
		box-sizing: border-box;
	}

	.group {
		flex: none;
		height: 85px;
		margin-top: 4px;
		box-sizing: border-box;
		border-right: 1px solid #dcdcdc;
	}

	.g1 { width: 98px; }
	.g2 { width: 107px; }
	.g3 { width: 135px; }
	.g4 { width: 115px; }
	.g5 { width: 194px; }
	.g6 { width: 55px; }
	.g7 { width: 43px; }
	.g8 { width: 55px; }

	.tools {
		height: 71px;
		display: flex;
	}

	.g1 .tools { padding-left: 6px; }
	.g2 .tools { padding-left: 6px; }
	.g3 .tools { padding-left: 7px; }
	.g4 .tools { padding-left: 11px; }
	.g5 .tools { padding-left: 7px; }

	.tool {
		width: 46px;
		flex: none;
		display: flex;
		flex-direction: column;
		align-items: center;
		padding-top: 1px;
	}

	.tool.w50 { width: 50px; margin-right: 3px; }
	.tool.w56 { width: 56px; }
	.g6 .tool, .g7 .tool, .g8 .tool { width: 100%; }

	.tool-label {
		margin-top: 5px;
		height: 16px;
		line-height: 16px;
		font-size: 11px;
		white-space: nowrap;
		color: #333;
	}

	.tool .caret {
		margin-top: 5px;
	}

	.smalls {
		width: 56px;
		flex: none;
		display: grid;
		grid-template-columns: 28px 28px;
		grid-auto-rows: 24px;
		justify-items: center;
		margin-top: -2px;
	}

	.smalls.one {
		width: 28px;
		grid-template-columns: 28px;
	}

	.face-grid {
		width: 57px;
		flex: none;
		display: grid;
		grid-template-columns: 30px 27px;
		grid-template-rows: 20px 24px 24px;
		justify-items: center;
		align-items: center;
		margin-top: -2px;
	}

	.face-grid > :global(svg:nth-child(1)) {
		grid-row: 1 / span 2;
		grid-column: 1;
	}

	.face-grid > :global(svg:nth-child(2)) { grid-row: 1; grid-column: 2; }
	.face-grid > :global(svg:nth-child(3)) { grid-row: 2; grid-column: 2; }
	.face-grid > :global(svg:nth-child(4)) { grid-row: 3; grid-column: 1; }
	.face-grid > :global(svg:nth-child(5)) { grid-row: 3; grid-column: 2; }

	.rel-list {
		width: 84px;
		flex: none;
		display: flex;
		flex-direction: column;
		gap: 4px;
		margin: -2px -1px 0 1px;
	}

	.rel {
		height: 20px;
		display: flex;
		align-items: center;
		gap: 3px;
		font-size: 11px;
		white-space: nowrap;
		color: #333;
	}

	.gtitle {
		position: relative;
		height: 14px;
		box-sizing: border-box;
		padding-right: 16px;
		text-align: center;
		color: #1d6c8d;
		font-size: 11px;
		line-height: 18px;
	}

	.gtitle .caret {
		position: absolute;
		right: 6px;
		top: 6px;
	}

	.ribbon-end {
		flex: 1;
		position: relative;
	}

	.ribbon-end .caret {
		position: absolute;
		right: 4px;
		top: 79px;
	}

	/* selection bar */
	.selbar {
		margin: 0 4px;
		height: 28px;
		flex: none;
		background: #fff;
		display: flex;
		align-items: center;
		border-bottom: 1px solid #aaa;
		box-sizing: border-box;
		padding-left: 12px;
		position: relative;
	}

	.menu-btn {
		margin: 0 5px 0 6px;
		font-size: 11.5px;
	}

	.vsep {
		width: 1px;
		height: 18px;
		background: #ddd;
		margin: 0 11px 0 9px;
		flex: none;
	}

	.vsep.last {
		margin: 0 0 0 4px;
	}

	.combo {
		height: 21px;
		box-sizing: border-box;
		border: 1px solid #777;
		display: flex;
		align-items: center;
		justify-content: space-between;
		padding: 0 4px 0 2px;
		font-size: 11px;
		flex: none;
	}

	.c1 { width: 149px; }
	.c2 { width: 157px; }

	.combo-arrow {
		width: 0;
		height: 0;
		border: 4px solid transparent;
		border-top: 5px solid #222;
		border-bottom: 0;
	}

	.funnel {
		margin: 0 8px;
		flex: none;
	}

	.sel-tools {
		display: flex;
		align-items: center;
		margin-left: 7px;
		gap: 6px;
	}

	.sel-tools svg { flex: none; }
	.t4 { margin-left: -3px; }
	.t6 { margin-left: 3px; }
	.t5 { margin-left: 4px; }

	.pressed {
		width: 22px;
		height: 23px;
		background: #ececec;
		border: 1px solid #ddd;
		display: flex;
		align-items: center;
		justify-content: center;
		box-sizing: border-box;
		margin-right: -1px;
	}

	.sel-end {
		position: absolute;
		right: 4px;
		top: 12px;
	}

	/* body */
	.body {
		flex: none;
		height: 488px;
		margin: 0 4px;
		display: flex;
		background: #fff;
	}

	.leftbar {
		position: relative;
		width: 32px;
		flex: none;
		background: #dcdcdc;
		display: flex;
		flex-direction: column;
		align-items: center;
	}

	.lb-gear {
		height: 28px;
		display: flex;
		align-items: center;
		margin-bottom: 15px;
		flex: none;
	}

	.lb-item {
		width: 32px;
		height: 42px;
		display: flex;
		align-items: center;
		justify-content: center;
		box-sizing: border-box;
		flex: none;
	}

	.lb-item.selected {
		width: 30px;
		margin-left: 2px;
		background: #fff;
		border: 1px solid #c4c4c4;
		border-right: 0;
		height: 45px;
		margin-top: -1px;
		margin-bottom: -2px;
	}

	.lb-info {
		margin-top: 20px;
		flex: none;
	}

	.lb-browser {
		margin-top: 25px;
		flex: none;
	}

	.lb-wave {
		margin-top: 18px;
		flex: none;
	}

	.lb-arrows {
		display: flex;
		flex-direction: column;
		gap: 7px;
		margin-top: 6px;
	}

	.navigator {
		width: 282px;
		flex: none;
		display: flex;
		flex-direction: column;
		border-right: 1px solid #c8c8c8;
	}

	.nav-head {
		height: 30px;
		display: flex;
		align-items: center;
		justify-content: space-between;
		padding: 0 15px 0 10px;
		font-size: 12px;
		flex: none;
	}

	.tree {
		margin-left: 6px;
		width: 267px;
		flex: none;
		border: 1px solid #ddd;
		border-width: 1px 1px 0 1px;
		box-sizing: border-box;
	}

	.thead {
		height: 21px;
		display: flex;
		background: #f0f0f0;
		border-bottom: 1px solid #e0e0e0;
		box-sizing: border-box;
	}

	.th {
		width: 24px;
		flex: none;
		text-align: center;
		border-left: 1px solid #ddd;
		box-sizing: border-box;
		line-height: 20px;
		overflow: hidden;
	}

	.th.name {
		width: 200px;
		border: 0;
		display: flex;
		align-items: center;
		gap: 19px;
		padding-left: 8px;
	}

	.th.clip {
		width: 17px;
		text-indent: 2px;
		white-space: nowrap;
	}

	.up {
		width: 0;
		height: 0;
		border: 4.5px solid transparent;
		border-bottom: 5px solid #222;
		border-top: 0;
	}

	.rows {
		position: relative;
		height: 311px;
		overflow: hidden;
	}

	.dotline {
		position: absolute;
		left: 10px;
		top: 9px;
		height: 60px;
		border-left: 1px dotted #999;
	}

	.dotline.inner {
		left: 29px;
		top: 70px;
		height: 179px;
	}

	.row {
		height: 20px;
		display: flex;
		box-sizing: border-box;
		border-bottom: 1px solid #f0f0f0;
		background: #fff;
	}

	.row.alt {
		background: #fafafa;
	}

	.cell {
		width: 24px;
		flex: none;
		border-left: 1px solid #eee;
		box-sizing: border-box;
		display: flex;
		align-items: center;
		justify-content: center;
	}

	.cell.last {
		width: 17px;
	}

	.cell.name {
		position: relative;
		width: 200px;
		border: 0;
		justify-content: flex-start;
		white-space: nowrap;
		overflow: hidden;
		font-size: 12px;
	}

	.hdots {
		position: absolute;
		left: 11px;
		top: 9px;
		width: 8px;
		border-top: 1px dotted #999;
	}

	.hdots.deep {
		left: 30px;
		width: 7px;
	}

	.toggle {
		position: absolute;
		left: 6px;
		top: 5px;
		width: 9px;
		height: 9px;
		box-sizing: border-box;
		background: #fff;
		border: 1px solid #ccc;
		font: 9px/7px "Liberation Mono", monospace;
		text-align: center;
		color: #222;
	}

	.k {
		flex: none;
		position: relative;
	}

	.ball {
		width: 13px;
		height: 13px;
		flex: none;
		position: relative;
		border-radius: 50%;
		background: radial-gradient(circle at 40% 30%, #b8f7a8, #2ec92e 70%);
		border: 1px solid #1d8a2d;
		box-sizing: border-box;
		margin-right: 2px;
	}

	.eye {
		flex: none;
		position: relative;
	}

	.tp {
		flex: none;
	}

	.txt {
		margin-left: 3px;
		font-size: 12px;
		color: #222;
	}

	.txt.gap {
		margin-left: 4px;
	}

	.txt.gray {
		color: #a8a8a8;
	}

	.txt.bold {
		font-weight: 700;
	}

	.hscroll {
		height: 17px;
		background: #f0f0f0;
		display: flex;
		align-items: center;
		padding-left: 17px;
	}

	.hscroll i {
		width: 173px;
		height: 2px;
		background: #8a8a8a;
	}

	.sash {
		margin: 1px 0 0 6px;
		width: 267px;
		height: 4px;
		background: #d4d4d4;
		border: 1px solid #aaa;
		box-sizing: border-box;
		flex: none;
	}

	.panels {
		margin-left: 6px;
		width: 267px;
		flex: none;
		padding-top: 1px;
	}

	.panel {
		height: 24px;
		box-sizing: border-box;
		border-bottom: 2px solid #ccc;
		display: flex;
		align-items: center;
		gap: 9px;
		padding: 2px 0 0 10px;
		color: #1d6c8d;
		font-size: 14px;
		line-height: 20px;
	}

	.panel b {
		width: 0;
		height: 0;
		border: 4px solid transparent;
		border-left: 5px solid #1d6c8d;
		border-right: 0;
	}

	/* graphics */
	.graphics {
		flex: none;
		width: 494px;
		margin-left: 1px;
		display: flex;
		flex-direction: column;
	}

	.gtabs {
		height: 26px;
		display: flex;
		flex: none;
		border-bottom: 2px solid #05648a;
	}

	.gtab {
		height: 26px;
		width: 95px;
		display: flex;
		align-items: center;
		gap: 2px;
		padding-left: 5px;
		box-sizing: border-box;
		font-size: 12px;
	}

	.gtab.current {
		width: 117px;
		background: #05648a;
		color: #fff;
		font-family: "Noto Sans", sans-serif;
		font-size: 12.5px;
		gap: 4px;
	}

	.gtab .x {
		margin-left: 2px;
	}

	.canvas {
		position: relative;
		flex: 1;
		overflow: hidden;
	}

	.scene {
		display: block;
		width: 494px;
		height: 460px;
	}

	.view-tool {
		position: absolute;
		left: 210px;
		top: 6px;
		width: 73px;
		height: 33px;
		background: #fff;
		display: flex;
		align-items: center;
		padding-left: 13px;
		box-sizing: border-box;
		gap: 5px;
	}

	.view-tool i {
		width: 1px;
		height: 26px;
		background: #ccc;
		margin-left: 5px;
	}

	.measure-bar {
		position: absolute;
		left: 32px;
		top: 181px;
		width: 286px;
		height: 30px;
		box-sizing: border-box;
		background: #eeeeee;
		border: 1px solid #bbb;
		display: flex;
		align-items: center;
	}

	.grip {
		width: 6px;
		height: 24px;
		margin: 0 11px 0 3px;
		flex: none;
		background-image: radial-gradient(#999 1px, transparent 1.2px);
		background-size: 3px 3px;
	}

	.fields {
		height: 22px;
		display: flex;
		background: #fff;
		border: 1px solid #ddd;
		box-sizing: border-box;
		width: 235px;
		flex: none;
	}

	.field {
		height: 100%;
		display: flex;
		align-items: center;
		justify-content: center;
		box-sizing: border-box;
		border-right: 1px solid #e4e4e4;
		font-size: 12px;
		flex: none;
		color: #222;
	}

	.dist {
		width: 75px;
		gap: 8px;
		justify-content: flex-start;
		padding-left: 4px;
	}

	.dist b {
		width: 0;
		height: 0;
		border: 4.5px solid transparent;
		border-top: 7px solid #222;
		border-bottom: 0;
	}

	.val {
		width: 53px;
		font-family: "Noto Sans", sans-serif;
	}

	.unit {
		width: 30px;
		font-family: "Noto Sans", sans-serif;
	}

	.icn {
		width: 25px;
	}

	.fields .icn:last-child {
		border: 0;
	}

	.bar-more {
		margin-left: 6px;
		display: flex;
		align-items: center;
		gap: 4px;
	}

	/* right strip */
	.rightbar {
		position: relative;
		flex: 1;
		background: #fff;
		display: flex;
		flex-direction: column;
		align-items: center;
		padding-top: 11px;
		padding-left: 1px;
	}

	.rb-item {
		height: 31.8px;
		flex: none;
		display: flex;
		align-items: center;
	}

	.xyz {
		display: flex;
		flex-direction: column;
		align-items: center;
		color: #d8742a;
		font: 10px/11px "Liberation Sans", sans-serif;
	}

	.rb-line {
		width: 27px;
		height: 1px;
		background: #ddd;
		margin-top: 5px;
	}

	.rb-arrow {
		position: absolute;
		left: 7px;
		top: 476px;
		width: 0;
		height: 0;
		border: 3.5px solid transparent;
		border-right: 4px solid #222;
		border-left: 0;
	}

	/* status */
	.status {
		margin: 0 4px;
		height: 22px;
		flex: none;
		background: #fff;
		border-top: 1px solid #aaa;
		box-sizing: border-box;
		position: relative;
		font-size: 11px;
		font-weight: 500;
		line-height: 21px;
		color: #222;
	}

	.st-left {
		margin-left: 3px;
	}

	.st-mid {
		position: absolute;
		left: 397px;
		top: 0;
	}

	.watermark {
		position: absolute;
		left: 686px;
		top: 682px;
		font-family: "Liberation Mono", "Noto Sans CJK SC", monospace;
		font-size: 12px;
		line-height: 18px;
		letter-spacing: 1.6px;
		color: #5a666c;
		white-space: nowrap;
	}
</style>
